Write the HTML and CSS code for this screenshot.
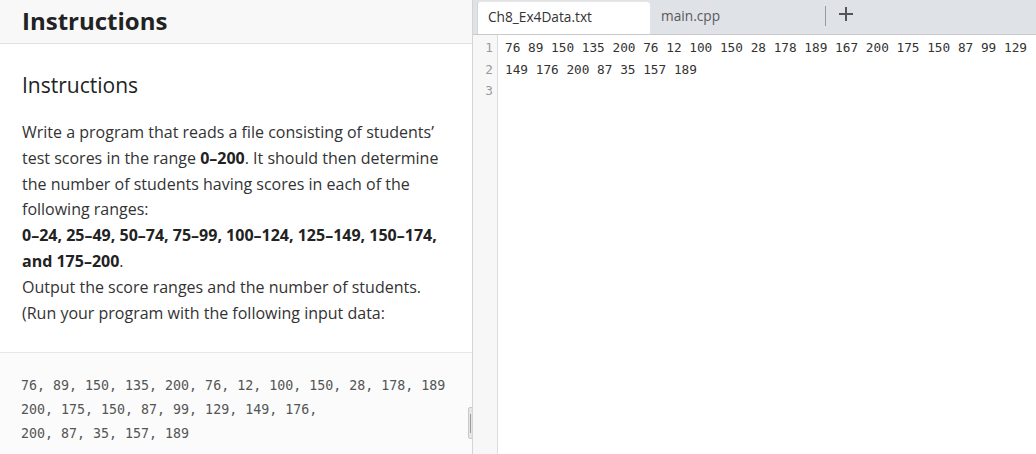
FILE: index.html
```html
<!DOCTYPE html>
<html>
<head>
<meta charset="utf-8">
<link rel="stylesheet" href="styles.css">
</head>
<body>
<div class="app">
  <section class="left">
    <header class="left-head"><h1>Instructions</h1></header>
    <div class="left-body">
      <h3>Instructions</h3>
      <p>Write a program that reads a file consisting of students’ test scores in the range <b>0–200</b>. It should then determine the number of students having scores in each of the following ranges:<br><b>0–24, 25–49, 50–74, 75–99, 100–124, 125–149, 150–174, and 175–200</b>.<br>Output the score ranges and the number of students. (Run your program with the following input data:</p>
    </div>
    <pre class="data">76, 89, 150, 135, 200, 76, 12, 100, 150, 28, 178, 189
200, 175, 150, 87, 99, 129, 149, 176,
200, 87, 35, 157, 189</pre>
    <div class="handle"><span></span><span></span></div>
  </section>
  <section class="editor">
    <div class="tabs">
      <div class="tab active">Ch8_Ex4Data.txt</div>
      <div class="tab">main.cpp</div>
      <div class="sep"></div>
      <svg class="plus" width="14" height="14" viewBox="0 0 14 14"><path d="M7 0V14M0 7H14" stroke="#555" stroke-width="2"/></svg>
    </div>
    <div class="code">
      <div class="gutter"><div>1</div><div>2</div><div>3</div></div>
      <div class="lines"><div>76 89 150 135 200 76 12 100 150 28 178 189 167 200 175 150 87 99 129</div><div>149 176 200 87 35 157 189</div><div>&nbsp;</div></div>
    </div>
  </section>
</div>
</body>
</html>
```
FILE: styles.css
```css
html, body { margin: 0; padding: 0; }
body { width: 1036px; height: 454px; overflow: hidden; background: #fff; font-family: "Open Sans", sans-serif; color: #333; }
.app { display: flex; height: 454px; }
.left { position: relative; width: 472px; flex: none; border-right: 1px solid #d4d4d4; display: flex; flex-direction: column; overflow: hidden; }
.left-head { flex: none; background: #f8f8f8; border-bottom: 1px solid #e2e2e2; display: flex; align-items: center; padding-left: 22px; box-sizing: border-box; height: 44px; }
.left-head h1 { margin: 0; font-size: 24px; font-weight: 700; color: #222; position: relative; top: -1px; }
.left-body { flex: none; padding: 24px 22px 26px 22px; }
.left-body h3 { margin: 0 0 20px 0; font-size: 21px; font-weight: 400; line-height: 32px; color: #222; position: relative; top: 1px; }
.left-body p { margin: 0; font-size: 16px; line-height: 25.8px; color: #333; }
.left-body b { font-weight: 700; color: #222; }
.data { margin: 0; flex: 1 0 auto; background: #fbfbfb; border-top: 1px solid #e3e9ea; padding: 21px 21px; font-family: "DejaVu Sans Mono", monospace; font-size: 13.3px; line-height: 24px; color: #555; }
.handle { position: absolute; left: 468px; top: 407px; width: 7px; height: 32px; background: #e6e6e6; border: 1px solid #c8c8c8; border-radius: 2px; display: flex; justify-content: center; align-items: center; gap: 2px; box-sizing: border-box; }
.handle span { width: 1px; height: 19px; background: #999; }
.editor { flex: 1; display: flex; flex-direction: column; min-width: 0; }
.tabs { flex: none; height: 35px; background: #dfe2e6; border-bottom: 1px solid #c9c9c9; box-sizing: border-box; display: flex; align-items: flex-end; padding-left: 4px; }
.tab { height: 33px; width: 173px; box-sizing: border-box; padding: 5px 0 0 10px; font-size: 13.7px; color: #5a5a5a; }
.tab.active { background: #fff; color: #333; border-left: 1px solid #d6d6d6; border-top: 1px solid #e6e6e6; border-radius: 4px 4px 0 0; }
.tab + .tab { width: 175px; padding-left: 11px; }
.sep { width: 1px; height: 20px; background: #999; align-self: flex-start; margin-top: 6px; }
.plus { align-self: flex-start; margin-left: 13px; margin-top: 7px; }
.code { flex: 1; display: flex; font-family: "DejaVu Sans Mono", monospace; font-size: 12.75px; line-height: 21.5px; }
.gutter { width: 25px; background: #f7f7f7; border-right: 1px solid #ddd; text-align: right; padding: 2px 4px 0 0; box-sizing: border-box; color: #9a9a9a; flex: none; }
.lines { padding: 2px 0 0 7px; color: #333; white-space: pre; }
```
